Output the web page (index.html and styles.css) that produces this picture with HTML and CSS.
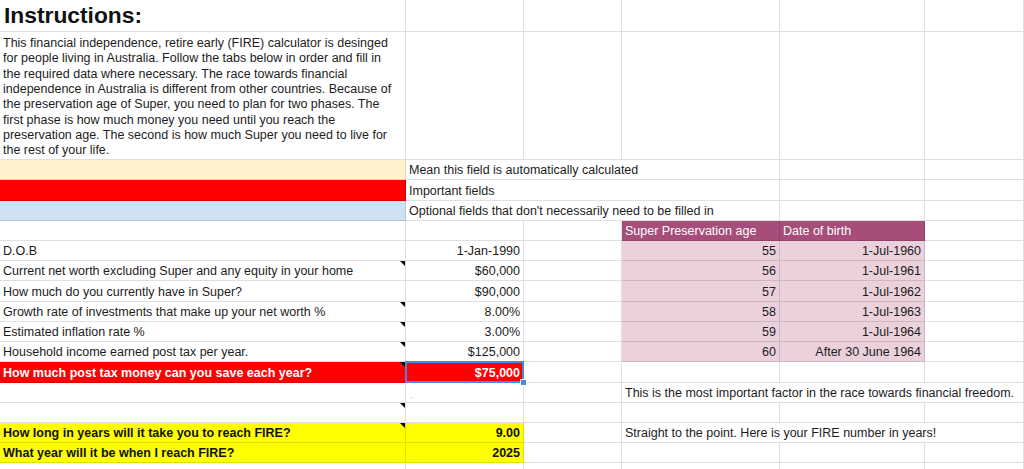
FILE: index.html
```html
<!DOCTYPE html>
<html lang="en">
<head>
<meta charset="utf-8">
<title>FIRE calculator - Instructions</title>
<link rel="stylesheet" href="styles.css">
</head>
<body>
<div class="sheet">
  <!-- row 1 -->
  <div class="c title">Instructions:</div>
  <div class="c"></div><div class="c"></div><div class="c"></div><div class="c"></div><div class="c"></div>
  <!-- row 2 -->
  <div class="c para">This financial independence, retire early (FIRE) calculator is desinged<br>for people living in Australia. Follow the tabs below in order and fill in<br>the required data where necessary. The race towards financial<br>independence in Australia is different from other countries. Because of<br>the preservation age of Super, you need to plan for two phases. The<br>first phase is how much money you need until you reach the<br>preservation age. The second is how much Super you need to live for<br>the rest of your life.</div>
  <div class="c"></div><div class="c"></div><div class="c"></div><div class="c"></div><div class="c"></div>
  <!-- row 3 -->
  <div class="c beige"></div>
  <div class="c span3">Mean this field is automatically calculated</div>
  <div class="c"></div><div class="c"></div>
  <!-- row 4 -->
  <div class="c red"></div>
  <div class="c span3">Important fields</div>
  <div class="c"></div><div class="c"></div>
  <!-- row 5 -->
  <div class="c blue"></div>
  <div class="c span3">Optional fields that don't necessarily need to be filled in</div>
  <div class="c"></div><div class="c"></div>
  <!-- row 6 -->
  <div class="c"></div><div class="c"></div><div class="c"></div>
  <div class="c head">Super Preservation age</div>
  <div class="c head">Date of birth</div>
  <div class="c"></div>
  <!-- row 7 -->
  <div class="c">D.O.B</div>
  <div class="c num">1-Jan-1990</div>
  <div class="c"></div>
  <div class="c pink num">55</div>
  <div class="c pink num">1-Jul-1960</div>
  <div class="c"></div>
  <!-- row 8 -->
  <div class="c note">Current net worth excluding Super and any equity in your home</div>
  <div class="c num">$60,000</div>
  <div class="c"></div>
  <div class="c pink num">56</div>
  <div class="c pink num">1-Jul-1961</div>
  <div class="c"></div>
  <!-- row 9 -->
  <div class="c">How much do you currently have in Super?</div>
  <div class="c num">$90,000</div>
  <div class="c"></div>
  <div class="c pink num">57</div>
  <div class="c pink num">1-Jul-1962</div>
  <div class="c"></div>
  <!-- row 10 -->
  <div class="c note">Growth rate of investments that make up your net worth %</div>
  <div class="c num">8.00%</div>
  <div class="c"></div>
  <div class="c pink num">58</div>
  <div class="c pink num">1-Jul-1963</div>
  <div class="c"></div>
  <!-- row 11 -->
  <div class="c note">Estimated inflation rate %</div>
  <div class="c num">3.00%</div>
  <div class="c"></div>
  <div class="c pink num">59</div>
  <div class="c pink num">1-Jul-1964</div>
  <div class="c"></div>
  <!-- row 12 -->
  <div class="c note">Household income earned post tax per year.</div>
  <div class="c num">$125,000</div>
  <div class="c"></div>
  <div class="c pink num">60</div>
  <div class="c pink num">After 30 June 1964</div>
  <div class="c"></div>
  <!-- row 13 -->
  <div class="c red strong-w note">How much post tax money can you save each year?</div>
  <div class="c red strong-w num selected">$75,000<span class="handle"></span></div>
  <div class="c"></div><div class="c"></div><div class="c"></div><div class="c"></div>
  <!-- row 14 -->
  <div class="c"></div>
  <div class="c dotcell"><span class="dot"></span></div>
  <div class="c"></div>
  <div class="c span3">This is the most important factor in the race towards financial freedom.</div>
  <!-- row 15 -->
  <div class="c note"></div>
  <div class="c"></div><div class="c"></div><div class="c"></div><div class="c"></div><div class="c"></div>
  <!-- row 16 -->
  <div class="c yellow strong note">How long in years will it take you to reach FIRE?</div>
  <div class="c yellow strong num">9.00</div>
  <div class="c"></div>
  <div class="c span3">Straight to the point. Here is your FIRE number in years!</div>
  <!-- row 17 -->
  <div class="c yellow strong">What year will it be when I reach FIRE?</div>
  <div class="c yellow strong num">2025</div>
  <div class="c"></div><div class="c"></div><div class="c"></div><div class="c"></div>
  <!-- row 18 -->
  <div class="c"></div><div class="c"></div><div class="c"></div><div class="c"></div><div class="c"></div><div class="c"></div>
</div>
</body>
</html>
```
FILE: styles.css
```css
* { box-sizing: border-box; }

html, body {
  margin: 0;
  padding: 0;
  background: #ffffff;
}

body {
  font-family: "Liberation Sans", Arial, sans-serif;
  font-size: 12.5px;
  color: #1c1c1c;
  overflow: hidden;
}

.sheet {
  display: grid;
  grid-template-columns: 406px 118px 98px 158px 145px 99px;
  grid-template-rows: 32px 128px 20px 21px 20px 20px 20px 20px 21px 20px 20px 20px 21px 20px 20px 20px 20px 20px;
  width: 1044px;
}

.c {
  position: relative;
  display: flex;
  align-items: flex-end;
  padding: 0 3px 1px 3px;
  border-right: 1px solid rgba(0, 0, 0, 0.12);
  border-bottom: 1px solid rgba(0, 0, 0, 0.12);
  white-space: nowrap;
  overflow: visible;
  line-height: 15px;
}

.title {
  font-size: 22.8px;
  font-weight: bold;
  line-height: 26px;
  padding-left: 4px;
  padding-bottom: 3px;
  color: #111;
}

.para {
  display: block;
  padding-top: 4px;
  padding-bottom: 0;
  line-height: 15.33px;
}

.span3 {
  grid-column: span 3;
  z-index: 1;
}

.num {
  justify-content: flex-end;
}

.beige { background: #fff2cc; }
.red { background: #ff0000; }
.blue { background: #cfe2f3; }
.yellow { background: #ffff00; }
.pink { background: #ead1dc; }

.head {
  background: #a64d79;
  color: #ffffff;
}

.strong { font-weight: bold; color: #111; }
.strong-w { font-weight: bold; color: #ffffff; }

.note::after {
  content: "";
  position: absolute;
  top: 0;
  right: 0;
  width: 0;
  height: 0;
  border-top: 5px solid #000;
  border-left: 5px solid transparent;
}

.selected::before {
  content: "";
  position: absolute;
  left: -1px;
  top: -1px;
  right: -1px;
  bottom: -1px;
  border: 2px solid #4a86e8;
  pointer-events: none;
}

.handle {
  position: absolute;
  right: -4px;
  bottom: -4px;
  width: 7px;
  height: 7px;
  background: #4a86e8;
  border: 1px solid #ffffff;
  z-index: 2;
}

.dotcell {
  align-items: flex-start;
  padding-top: 14px;
  padding-left: 5px;
}

.dot {
  display: block;
  width: 1px;
  height: 1px;
  background: #b8a590;
}
```
